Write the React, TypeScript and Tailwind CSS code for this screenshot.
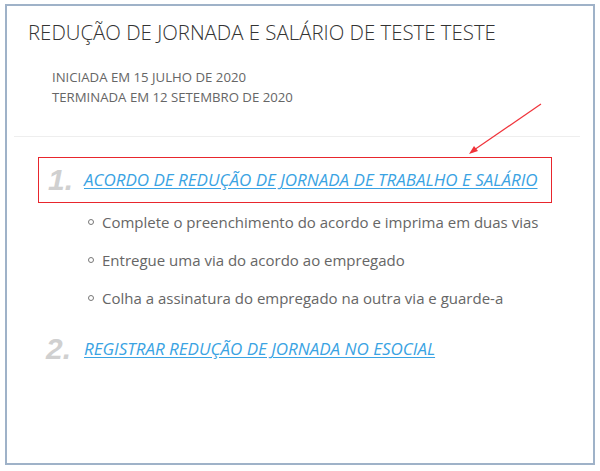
export default function App() {
  const steps = [
    "Complete o preenchimento do acordo e imprima em duas vias",
    "Entregue uma via do acordo ao empregado",
    "Colha a assinatura do empregado na outra via e guarde-a",
  ];

  return (
    <div className="relative h-[471px] w-[600px] bg-white px-[5px] pb-[6px] pt-[4px] font-['Open_Sans',sans-serif]">
      <div className="h-full border-2 border-[#9fb2c8] bg-white">
        <div className="pl-[21px] pt-[11px]">
          <h1 className="text-[20.4px] font-light leading-[30px] text-[#333]">
            REDUÇÃO DE JORNADA E SALÁRIO DE TESTE TESTE
          </h1>
          <div className="mt-[20px] pl-[24px] text-[13.2px] leading-[20px] text-[#666]">
            <div>INICIADA EM 15 JULHO DE 2020</div>
            <div>TERMINADA EM 12 SETEMBRO DE 2020</div>
          </div>
        </div>

        <div className="ml-[7px] mr-[13px] mt-[29px] border-t border-[#eeeeee]" />

        <div className="pl-[31px] pt-[20px]">
          <div className="flex h-[46px] w-[514px] items-center border border-[#e8262d] pl-[9px]">
            <span className="w-[36px] text-[30px] font-bold italic leading-none text-[#d0d0d0] font-['Liberation_Sans',sans-serif]">
              1.
            </span>
            <a href="#" className="text-[17px] italic text-[#3aa3e3] underline underline-offset-2">
              ACORDO DE REDUÇÃO DE JORNADA DE TRABALHO E SALÁRIO
            </a>
          </div>

          <ul className="pl-[50px]">
            {steps.map((s) => (
              <li key={s} className="flex h-[38px] items-center text-[15px] text-[#666]">
                <span className="mr-[8px] h-[6px] w-[6px] rounded-full border border-[#777]" />
                {s}
              </li>
            ))}
          </ul>

          <div className="mt-[17px] flex items-center pl-[8px]">
            <span className="w-[38px] text-[30px] font-bold italic leading-none text-[#d0d0d0] font-['Liberation_Sans',sans-serif]">
              2.
            </span>
            <a href="#" className="text-[17px] italic text-[#3aa3e3] underline underline-offset-2">
              REGISTRAR REDUÇÃO DE JORNADA NO ESOCIAL
            </a>
          </div>
        </div>
      </div>

      <svg className="absolute left-0 top-0" width="600" height="471" viewBox="0 0 600 471">
        <line x1="541" y1="104" x2="474" y2="150" stroke="#f0333a" strokeWidth="1.2" />
        <polygon points="469,154 474,146 478,151" fill="#f0333a" />
      </svg>
    </div>
  );
}
